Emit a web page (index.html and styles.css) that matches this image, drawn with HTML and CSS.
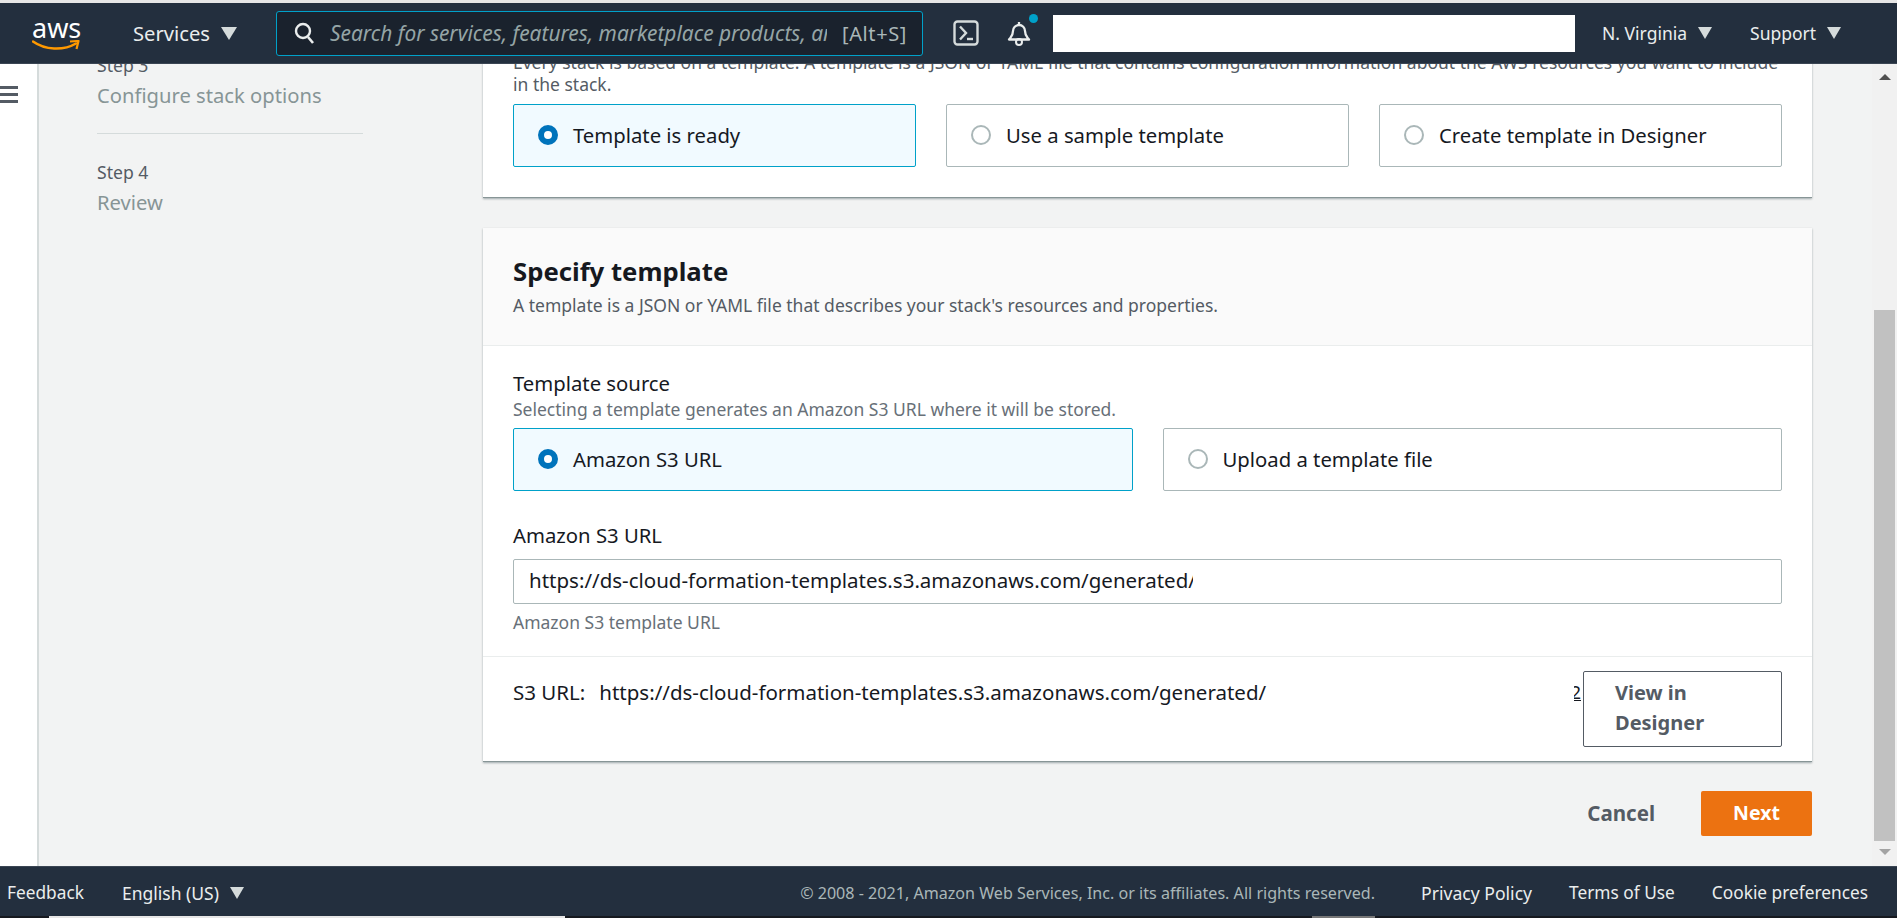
FILE: index.html
```html
<!DOCTYPE html>
<html lang="en">
<head>
    <meta charset="UTF-8">
    <meta name="viewport" content="width=device-width, initial-scale=1.0">
    <title>Create stack</title>
    <link rel="stylesheet" href="styles.css">
</head>
<body>
    <div class="app">
        <div class="top-strip"></div>
        <header class="nav">
            <a class="logo">
                <span class="logo-text">aws</span>
                <svg class="logo-smile" width="50" height="12" viewBox="0 0 50 12">
                    <path d="M1 1.5C13 10 31 11 44 3.5" fill="none" stroke="#f90" stroke-width="2.4" stroke-linecap="round"/>
                    <path d="M38 1.500L46.500 1L44.500 9" fill="none" stroke="#f90" stroke-width="2.2" stroke-linejoin="round"/>
                </svg>
            </a>
            <span class="nav-link services">Services</span>
            <span class="caret caret-big"></span>
            <div class="search">
                <svg class="search-icon" width="22" height="24" viewBox="0 0 22 24">
                    <circle cx="10" cy="10" r="7" fill="none" stroke="#eaeded" stroke-width="2.4"/>
                    <path d="M15 16l5 6" stroke="#eaeded" stroke-width="2.6" fill="none"/>
                </svg>
                <input class="search-input" type="text" placeholder="Search for services, features, marketplace products, and docs">
                <span class="search-key">[Alt+S]</span>
            </div>
            <svg class="shell-icon" width="26" height="26" viewBox="0 0 26 26">
                <rect x="1.5" y="1.5" width="23" height="23" rx="3" fill="none" stroke="#d5dbdb" stroke-width="2.4"/>
                <path d="M7 6.5l6 6.5-6 6.5" fill="none" stroke="#d5dbdb" stroke-width="2.4"/>
                <path d="M14 19h6" stroke="#d5dbdb" stroke-width="2.4"/>
            </svg>
            <div class="bell">
                <svg width="26" height="26" viewBox="0 0 26 26">
                    <path d="M13 2v3M7 11a6 6 0 0 1 12 0c0 5 2 6 4 8.500H3c2-2.500 4-3.500 4-8.500z" fill="none" stroke="#eaeded" stroke-width="2.300" stroke-linejoin="round"/>
                    <circle cx="13" cy="22" r="3" fill="none" stroke="#eaeded" stroke-width="2"/>
                </svg>
                <span class="bell-dot"></span>
            </div>
            <div class="account-box"></div>
            <span class="nav-link region">N. Virginia</span>
            <span class="caret"></span>
            <span class="nav-link support">Support</span>
            <span class="caret"></span>
        </header>

        <div class="main">
            <div class="rail">
                <div class="rail-icon"><span></span><span></span><span></span></div>
            </div>
            <nav class="steps">
                <div class="step-no step-cut">Step 3</div>
                <div class="step-name">Configure stack options</div>
                <hr class="step-line">
                <div class="step-no">Step 4</div>
                <div class="step-name">Review</div>
            </nav>
            <div class="content">
                <section class="card card-cut">
                    <div class="card-body-top">
                        <p class="lead">Every stack is based on a template. A template is a JSON or YAML file that contains configuration information about the AWS resources you want to include in the stack.</p>
                        <div class="tiles tiles-3">
                            <label class="tile tile-on"><span class="radio"></span>Template is ready</label>
                            <label class="tile"><span class="radio"></span>Use a sample template</label>
                            <label class="tile"><span class="radio"></span>Create template in Designer</label>
                        </div>
                    </div>
                </section>

                <section class="card card-main">
                    <div class="card-head">
                        <h2>Specify template</h2>
                        <p>A template is a JSON or YAML file that describes your stack's resources and properties.</p>
                    </div>
                    <div class="card-body">
                        <div class="field-label">Template source</div>
                        <div class="field-desc">Selecting a template generates an Amazon S3 URL where it will be stored.</div>
                        <div class="tiles tiles-2">
                            <label class="tile tile-on"><span class="radio"></span>Amazon S3 URL</label>
                            <label class="tile"><span class="radio"></span>Upload a template file</label>
                        </div>
                        <div class="field-label url-label">Amazon S3 URL</div>
                        <input class="url-input" type="text" value="https://ds-cloud-formation-templates.s3.amazonaws.com/generated/">
                        <div class="field-desc hint">Amazon S3 template URL</div>
                    </div>
                    <div class="card-foot">
                        <span class="s3-label">S3 URL:</span>
                        <span class="s3-url">https://ds-cloud-formation-templates.s3.amazonaws.com/generated/</span>
                        <span class="s3-tail">2</span>
                        <button class="btn-designer">View in Designer</button>
                    </div>
                </section>

                <div class="actions">
                    <button class="btn-cancel">Cancel</button>
                    <button class="btn-next">Next</button>
                </div>
            </div>
            <div class="track">
                <span class="arrow-up"></span>
                <div class="thumb"></div>
                <span class="arrow-down"></span>
            </div>
        </div>

        <footer class="foot">
            <span class="foot-link">Feedback</span>
            <span class="foot-link lang">English (US)</span>
            <span class="caret"></span>
            <span class="copy">© 2008 - 2021, Amazon Web Services, Inc. or its affiliates. All rights reserved.</span>
            <span class="foot-link privacy">Privacy Policy</span>
            <span class="foot-link terms">Terms of Use</span>
            <span class="foot-link cookies">Cookie preferences</span>
        </footer>
        <div class="bottom-strip"><span class="piece-a"></span><span class="piece-b"></span></div>
    </div>
</body>
</html>
```

FILE: styles.css
```css
* {
    box-sizing: border-box;
}
html, body {
    margin: 0;
    height: 100%;
    overflow: hidden;
    background: #fff;
}
body {
    font-family: "Noto Sans", "Open Sans", sans-serif;
    font-size: 18px;
    color: #16191f;
}
p, h2 {
    margin: 0;
}
.app {
    width: 1897px;
    height: 918px;
    display: flex;
    flex-direction: column;
}
.top-strip {
    height: 3px;
    background: #e6e6e6;
}

/* top bar */
.nav {
    height: 61px;
    flex: none;
    display: flex;
    align-items: center;
    background: #232f3e;
    border-bottom: 1px solid #3a4553;
    color: #eaeded;
}
.logo {
    width: 50px;
    margin-left: 32px;
    position: relative;
    height: 36px;
}
.logo-text {
    display: block;
    width: 48px;
    font-size: 27px;
    line-height: 26px;
    color: #fff;
    text-align: center;
}
.logo-smile {
    position: absolute;
    left: 0;
    top: 25px;
}
.nav-link {
    font-size: 17.5px;
    white-space: nowrap;
}
.services {
    margin-left: 51px;
    font-size: 20.2px;
}
.caret {
    width: 0;
    height: 0;
    border-left: 7px solid transparent;
    border-right: 7px solid transparent;
    border-top: 12px solid #d5dbdb;
    margin-left: 11px;
}
.caret-big {
    border-left-width: 8px;
    border-right-width: 8px;
    border-top-width: 13px;
}
.search {
    width: 647px;
    height: 45px;
    margin-left: 39px;
    display: flex;
    align-items: center;
    background: #1a222d;
    border: 1px solid #00a1c9;
    border-radius: 3px;
    padding-left: 16px;
}
.search-input {
    width: 497px;
    margin-left: 15px;
    padding: 0;
    border: 0;
    background: none;
    outline: 0;
    font: italic 20.900px "Noto Sans", sans-serif;
}
.search-input::placeholder {
    color: #95a5a6;
    opacity: 1;
}
.search-key {
    margin-left: 15px;
    color: #aab7b8;
    font-size: 20px;
    letter-spacing: .6px;
    white-space: nowrap;
}
.shell-icon {
    margin-left: 30px;
}
.bell {
    position: relative;
    width: 26px;
    height: 26px;
    margin-left: 27px;
}
.bell-dot {
    position: absolute;
    left: 23px;
    top: -6px;
    width: 9px;
    height: 9px;
    border-radius: 50%;
    background: #00a1c9;
}
.account-box {
    width: 522px;
    height: 37px;
    margin-left: 21px;
    background: #fff;
}
.region {
    margin-left: 27px;
}
.support {
    margin-left: 38px;
}

/* middle area, scrolled down a bit so the top is cut by the bar */
.main {
    flex: 1;
    min-height: 0;
    display: flex;
    overflow: hidden;
    background: #f2f3f3;
}
.rail {
    width: 39px;
    flex: none;
    background: #fff;
    border-right: 2px solid #d5dbdb;
    padding-top: 22px;
}
.rail-icon span {
    display: block;
    width: 18px;
    height: 3px;
    margin-bottom: 4px;
    background: #545b64;
}
.steps {
    width: 444px;
    flex: none;
    padding-left: 58px;
    padding-right: 120px;
}
.step-no {
    font-size: 17.600px;
    line-height: 22px;
    color: #545b64;
}
.step-cut {
    margin-top: -10px;
}
.step-name {
    font-size: 20.200px;
    line-height: 24px;
    margin-top: 7px;
    color: #879596;
}
.step-line {
    margin: 26px 0 27px;
    border: 0;
    border-top: 1px solid #d5dbdb;
}
.content {
    width: 1329px;
    flex: none;
}
.card {
    background: #fff;
    border-bottom: 1px solid #879596;
    box-shadow: 0 1px 2px rgba(0, 28, 36, .35);
}
.card-cut {
    margin-top: -13px;
}
.card-body-top {
    padding: 0 30px 30px;
}
.lead {
    line-height: 22px;
    color: #545b64;
    font-size: 17.500px;
    margin-bottom: 9px;
}
.tiles {
    display: grid;
    gap: 30px;
}
.tiles-3 {
    grid-template-columns: repeat(3, 1fr);
    gap: 30px;
}
.tiles-2 {
    grid-template-columns: repeat(2, 1fr);
}
.tile {
    height: 63px;
    display: flex;
    align-items: center;
    padding-left: 24px;
    padding-bottom: 1px;
    background: #fff;
    border: 1px solid #aab7b8;
    border-radius: 2px;
    font-size: 20.300px;
}
.tile-on {
    background: #f1faff;
    border-color: #00a1c9;
}
.radio {
    width: 20px;
    height: 20px;
    margin-right: 15px;
    border: 2px solid #aab7b8;
    border-radius: 50%;
    background: #fff;
}
.tile-on .radio {
    border: 6px solid #0073bb;
}
.card-main {
    margin-top: 30px;
}
.card-head {
    height: 118px;
    padding: 26px 30px 0;
    background: #fafafa;
    border-bottom: 1px solid #eaeded;
}
.card-head h2 {
    font-size: 25.700px;
    line-height: 36px;
    font-weight: 700;
}
.card-head p {
    margin-top: 4px;
    font-size: 17.500px;
    line-height: 22px;
    color: #545b64;
}
.card-body {
    padding: 26px 30px 23px;
}
.field-label {
    font-size: 20.300px;
    line-height: 22px;
}
.field-desc {
    margin-top: 4px;
    margin-bottom: 8px;
    font-size: 17.500px;
    line-height: 22px;
    color: #687078;
}
.url-label {
    margin-top: 33px;
    margin-bottom: 13px;
}
.url-input {
    display: block;
    width: 100%;
    height: 45px;
    padding: 0 588px 3px 15px;
    border: 1px solid #aab7b8;
    border-radius: 2px;
    outline: 0;
    color: #16191f;
    font: 20.500px "Noto Sans", sans-serif;
}
.hint {
    margin-top: 7px;
    margin-bottom: 0;
}
.card-foot {
    height: 105px;
    display: flex;
    align-items: flex-start;
    padding: 14px 30px 0;
    border-top: 1px solid #eaeded;
    line-height: 22px;
    font-size: 20.500px;
}
.s3-label {
    margin-top: 10px;
}
.s3-url {
    margin-top: 10px;
    margin-left: 14px;
    white-space: nowrap;
}
.s3-tail {
    width: 7px;
    margin-top: 10px;
    margin-left: auto;
    margin-right: 2px;
    overflow: hidden;
    text-decoration: underline;
    direction: rtl;
    font-size: 18px;
}
.btn-designer {
    width: 199px;
    height: 76px;
    padding: 0 31px 2px;
    text-align: left;
    background: #fff;
    border: 1px solid #545b64;
    border-radius: 2px;
    color: #545b64;
    font: 700 20px/30px "Noto Sans", sans-serif;
}
.actions {
    display: flex;
    justify-content: flex-end;
    align-items: center;
    margin-top: 29px;
}
.btn-cancel {
    margin-right: 46px;
    padding: 0 0 2px;
    border: 0;
    background: none;
    color: #545b64;
    font: 700 20.500px "Noto Sans", sans-serif;
}
.btn-next {
    width: 111px;
    height: 45px;
    padding: 0 0 2px;
    border: 0;
    border-radius: 2px;
    background: #ec7211;
    color: #fff;
    font: 700 19.500px "Noto Sans", sans-serif;
}

/* scrollbar is only drawn, the page doesn't scroll in the shot */
.track {
    width: 25px;
    margin-left: 60px;
    flex: none;
    background: #f1f1f1;
    display: flex;
    flex-direction: column;
    align-items: center;
}
.arrow-up, .arrow-down {
    width: 0;
    height: 0;
    border-left: 6px solid transparent;
    border-right: 6px solid transparent;
}
.arrow-up {
    margin-top: 10px;
    border-bottom: 6px solid #505050;
}
.thumb {
    width: 21px;
    height: 531px;
    margin-top: 230px;
    background: #c1c1c1;
}
.arrow-down {
    margin-top: 8px;
    border-top: 6px solid #a3a3a3;
}

/* bottom bar */
.foot {
    height: 50px;
    flex: none;
    display: flex;
    align-items: center;
    background: #232f3e;
    border-top: 1px solid #3a4553;
    padding: 2px 0 0 7px;
    color: #eaeded;
}
.foot-link {
    font-size: 17.300px;
    white-space: nowrap;
}
.lang {
    margin-left: 38px;
    font-size: 17.500px;
}
.copy {
    margin-left: auto;
    font-size: 16.100px;
    color: #aab7b8;
    white-space: nowrap;
}
.privacy {
    margin-left: 46px;
    font-size: 17.600px;
}
.terms {
    margin-left: 37px;
}
.cookies {
    margin-left: 37px;
    margin-right: 29px;
}
.bottom-strip {
    height: 2px;
    flex: none;
    display: flex;
    background: #16191f;
}
.piece-a {
    width: 516px;
    margin-left: 49px;
    background: #e6e6e6;
}
.piece-b {
    width: 63px;
    margin-left: 747px;
    background: #777;
}
```
